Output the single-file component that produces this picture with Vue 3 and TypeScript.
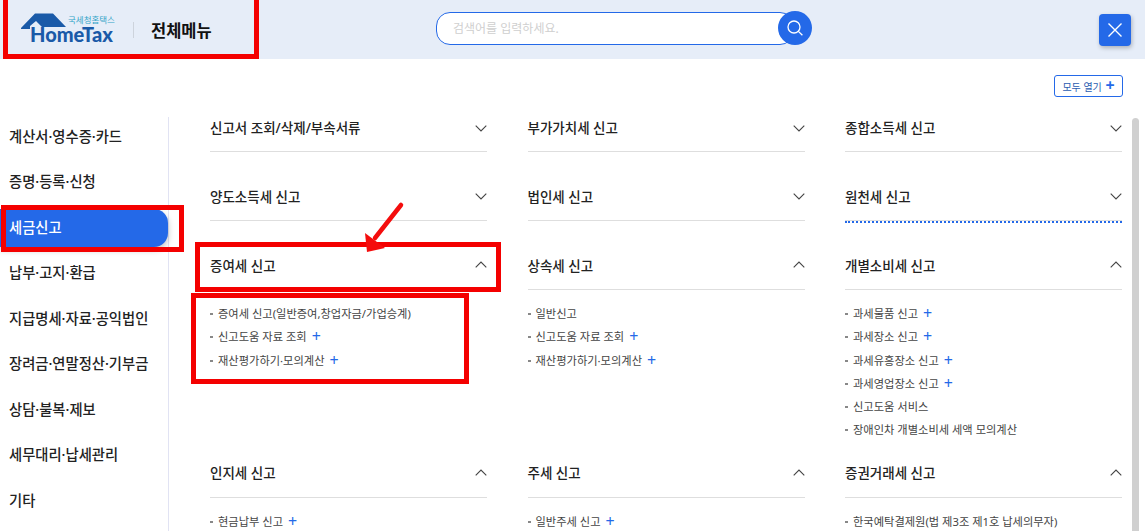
<script setup lang="ts">
interface Section {
  title: string
  open: boolean
  focus?: boolean
  items: { label: string; plus?: boolean }[]
}

const navItems = [
  '계산서·영수증·카드',
  '증명·등록·신청',
  '세금신고',
  '납부·고지·환급',
  '지급명세·자료·공익법인',
  '장려금·연말정산·기부금',
  '상담·불복·제보',
  '세무대리·납세관리',
  '기타',
]

const sections: Section[] = [
  { title: '신고서 조회/삭제/부속서류', open: false, items: [] },
  { title: '부가가치세 신고', open: false, items: [] },
  { title: '종합소득세 신고', open: false, items: [] },
  { title: '양도소득세 신고', open: false, items: [] },
  { title: '법인세 신고', open: false, items: [] },
  { title: '원천세 신고', open: false, focus: true, items: [] },
  {
    title: '증여세 신고',
    open: true,
    items: [
      { label: '증여세 신고(일반증여,창업자금/가업승계)' },
      { label: '신고도움 자료 조회', plus: true },
      { label: '재산평가하기·모의계산', plus: true },
    ],
  },
  {
    title: '상속세 신고',
    open: true,
    items: [
      { label: '일반신고' },
      { label: '신고도움 자료 조회', plus: true },
      { label: '재산평가하기·모의계산', plus: true },
    ],
  },
  {
    title: '개별소비세 신고',
    open: true,
    items: [
      { label: '과세물품 신고', plus: true },
      { label: '과세장소 신고', plus: true },
      { label: '과세유흥장소 신고', plus: true },
      { label: '과세영업장소 신고', plus: true },
      { label: '신고도움 서비스' },
      { label: '장애인차 개별소비세 세액 모의계산' },
    ],
  },
  { title: '인지세 신고', open: true, items: [{ label: '현금납부 신고', plus: true }] },
  { title: '주세 신고', open: true, items: [{ label: '일반주세 신고', plus: true }] },
  {
    title: '증권거래세 신고',
    open: true,
    items: [{ label: '한국예탁결제원(법 제3조 제1호 납세의무자)' }],
  },
]
</script>

<template>
  <div class="page">
    <header class="top">
      <div class="brand">
        <div class="logo">
          <svg class="roof" width="50" height="30" viewBox="0 0 50 30" aria-hidden="true">
            <path d="M0 22 L14 7.5 H32 L45 21 H21 L15 15 L9 20 V23 H0 Z" fill="#1a5aa8" />
          </svg>
          <span class="logo-kr">국세청홈택스</span>
          <span class="logo-en">HomeTax</span>
        </div>
        <span class="brand-sep"></span>
        <h1>전체메뉴</h1>
      </div>
      <div class="search">
        <div class="search-box">검색어를 입력하세요.</div>
        <button class="search-btn" aria-label="검색">
          <svg width="18" height="18" viewBox="0 0 18 18" fill="none" stroke="#fff" stroke-width="1.3">
            <circle cx="8" cy="8" r="6" />
            <path d="M12.4 12.4 L16.4 16.2" />
          </svg>
        </button>
      </div>
      <button class="close" aria-label="닫기">
        <svg width="16" height="16" viewBox="0 0 16 16" stroke="#fff" stroke-width="1.4">
          <path d="M1.5 1.5 L14.5 14.5 M14.5 1.5 L1.5 14.5" />
        </svg>
      </button>
    </header>

    <div class="toolbar">
      <button class="open-all">모두 열기 <span class="open-plus">+</span></button>
    </div>

    <div class="body">
      <nav class="side">
        <a v-for="item in navItems" :key="item" :class="{ active: item === '세금신고' }">{{ item }}</a>
      </nav>
      <main class="grid">
        <section v-for="s in sections" :key="s.title" class="sec">
          <div class="sec-head" :class="{ focus: s.focus }">
            <span>{{ s.title }}</span>
            <svg width="12" height="7" viewBox="0 0 12 7" fill="none" stroke="#444" stroke-width="1.1" :class="{ up: s.open }">
              <path d="M0.7 0.7 L6 6 L11.3 0.7" />
            </svg>
          </div>
          <ul v-if="s.items.length">
            <li v-for="it in s.items" :key="it.label">
              {{ it.label }}<span v-if="it.plus" class="plus">+</span>
            </li>
          </ul>
        </section>
      </main>
    </div>

    <div class="scroll-thumb"></div>

    <div class="mark" style="left: 3px; top: -5px; width: 256px; height: 64px"></div>
    <div class="mark" style="left: 1px; top: 205px; width: 183px; height: 47px"></div>
    <div class="mark" style="left: 195px; top: 242px; width: 306px; height: 50px"></div>
    <div class="mark" style="left: 191px; top: 293px; width: 278px; height: 91px"></div>
    <svg class="arrow" width="50" height="60" viewBox="0 0 50 60" aria-hidden="true">
      <path d="M39 5 L13 38" stroke="#f40d0d" stroke-width="4.5" stroke-linecap="round" />
      <path d="M5 52 L3 33 L23 48 Z" fill="#f40d0d" />
    </svg>
  </div>
</template>

<style scoped>
.page {
  position: relative;
  width: 1145px;
  height: 531px;
  overflow: hidden;
  background: #fff;
  font-family: "Noto Sans", "Noto Sans CJK KR", sans-serif;
  color: #222;
}

.top {
  display: flex;
  align-items: center;
  height: 59px;
  padding: 0 14px 0 21px;
  background: #e6edf8;
}

.brand {
  display: flex;
  align-items: center;
  width: 415px;
}

.logo {
  position: relative;
  width: 94px;
  height: 47px;
}

.roof {
  position: absolute;
  left: 0;
  top: 0;
}

.logo-kr {
  position: absolute;
  left: 47px;
  top: 9px;
  font-size: 8.5px;
  line-height: 10px;
  color: #35a5c8;
  white-space: nowrap;
}

.logo-en {
  position: absolute;
  left: 9px;
  top: 19px;
  font-family: Lato, sans-serif;
  font-size: 20px;
  line-height: 18px;
  font-weight: 900;
  color: #1a5aa8;
  white-space: nowrap;
}

.brand-sep {
  width: 1px;
  height: 16px;
  margin: 0 17px 0 18px;
  background: #cdd3dc;
}

h1 {
  margin: 0;
  font-size: 16.5px;
  font-weight: 700;
  color: #111;
}

.search {
  display: flex;
  align-items: center;
  margin-top: -3px;
}

.search-box {
  box-sizing: border-box;
  width: 358px;
  height: 33px;
  padding-left: 16px;
  border: 1px solid #2469e8;
  border-radius: 14px;
  background: #fff;
  font-size: 12px;
  line-height: 31px;
  color: #cfcfcf;
}

.search-btn {
  display: flex;
  align-items: center;
  justify-content: center;
  width: 34px;
  height: 34px;
  margin-left: -16px;
  padding: 0;
  border: 0;
  border-radius: 50%;
  background: #2469e8;
}

.close {
  display: flex;
  align-items: center;
  justify-content: center;
  width: 32px;
  height: 32px;
  margin-left: auto;
  padding: 0;
  border: 0;
  border-radius: 4px;
  background: #2469e8;
  box-shadow: 1px 2px 4px rgba(0, 0, 0, 0.25);
}

.toolbar {
  display: flex;
  justify-content: flex-end;
  height: 22px;
  padding: 16px 22px 0 0;
}

.open-all {
  box-sizing: border-box;
  width: 69px;
  height: 22px;
  padding: 0;
  border: 1px solid #2469e8;
  border-radius: 3px;
  background: #fff;
  font-family: inherit;
  font-size: 10px;
  color: #2a5cb0;
  white-space: nowrap;
}

.open-plus {
  margin-left: 1px;
  font-size: 16px;
  font-weight: 700;
  line-height: 10px;
  color: #2469e8;
}

.body {
  display: flex;
  align-items: flex-start;
  margin-top: 20px;
}

.side {
  flex: 0 0 169px;
  box-sizing: border-box;
  height: 420px;
  border-right: 1px solid #e1e3f3;
}

.side a {
  display: block;
  height: 38px;
  margin-bottom: 7.5px;
  padding-left: 9px;
  font-size: 14.3px;
  font-weight: 500;
  line-height: 38px;
  color: #222;
  white-space: nowrap;
}

.side a:first-child {
  margin-top: 0.5px;
}

.side a.active {
  width: 168px;
  box-sizing: border-box;
  border-radius: 0 14px 14px 0;
  background: #2469e8;
  box-shadow: 0 3px 6px rgba(0, 0, 0, 0.25);
  color: #fff;
}

.grid {
  display: grid;
  grid-template-columns: repeat(3, 277px);
  column-gap: 40.5px;
  row-gap: 23px;
  margin-left: 41px;
  margin-top: -12px;
}

.sec-head {
  position: relative;
  display: flex;
  align-items: center;
  justify-content: space-between;
  box-sizing: border-box;
  height: 47px;
  padding: 0 0 2px;
  border-bottom: 1px solid #dedede;
  font-size: 13.5px;
  font-weight: 500;
  color: #222;
}

.sec:nth-child(n + 4) .sec-head {
  height: 46px;
  padding-bottom: 4px;
}

.sec-head.focus::after {
  content: "";
  position: absolute;
  left: 0;
  right: 0;
  bottom: -3px;
  border-bottom: 2px dotted #2469e8;
}

.sec-head svg {
  transform: translateY(1px);
}

.sec-head svg.up {
  transform: rotate(180deg);
}

ul {
  margin: 0 0 -13px;
  padding: 12px 0 0;
  list-style: none;
}

li {
  position: relative;
  padding-left: 8px;
  height: 23.3px;
  font-size: 11.25px;
  line-height: 23.3px;
  color: #444;
  white-space: nowrap;
}

li::before {
  content: "";
  position: absolute;
  left: 0;
  top: 11px;
  width: 3px;
  height: 2px;
  background: #888;
}

.plus {
  display: inline-block;
  margin-left: 5px;
  font-size: 16px;
  line-height: 10px;
  color: #2469e8;
  transform: translateY(1px);
}

.scroll-thumb {
  position: absolute;
  left: 1132px;
  top: 118px;
  bottom: 0;
  width: 7px;
  border-radius: 4px 4px 0 0;
  background: #d0d0d0;
}

.mark {
  position: absolute;
  box-sizing: border-box;
  border: 5px solid #f40000;
}

.arrow {
  position: absolute;
  left: 362px;
  top: 200px;
}
</style>
